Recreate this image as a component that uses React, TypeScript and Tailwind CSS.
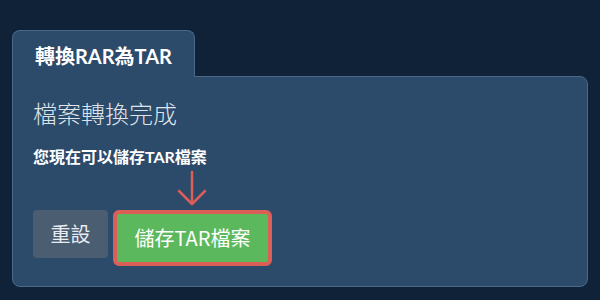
import React from 'react';

const font = { fontFamily: '"Lato", "Noto Sans CJK TC", sans-serif' };
const cjk = { fontFamily: '"Noto Sans CJK TC", sans-serif' };

export default function App() {
    return (
        <div className="w-[600px] h-[300px] bg-[#0f2237] px-3 pt-[30px]" style={font}>
            <div className="relative z-10 -mb-px w-[183px] h-[47px] bg-[#2c4a6a] border border-b-0 border-[#4b6888] rounded-t-lg flex items-center pl-[22px] pt-[3px]">
                <span className="text-white font-bold text-[20px] leading-none">轉換RAR為TAR</span>
            </div>
            <div className="w-[576px] h-[211px] bg-[#2c4a6a] border border-[#4b6888] rounded-b-lg rounded-tr-lg px-5 pt-[22px]">
                <h2 className="text-[24px] leading-[28px] font-light text-[#dfe4ea]" style={cjk}>檔案轉換完成</h2>
                <p className="mt-[21px] text-[16px] leading-[18px] font-bold text-white">您現在可以儲存TAR檔案</p>
                <div className="pl-[144px] h-[44px] pt-[4px]">
                    <svg width="30" height="36" viewBox="0 0 30 36" fill="none" stroke="#dc5f57" strokeWidth="2.5" strokeLinecap="round" strokeLinejoin="round">
                        <line x1="15" y1="2" x2="15" y2="34" />
                        <polyline points="2,21 15,34 28,21" />
                    </svg>
                </div>
                <div className="flex items-start gap-[5px]" style={cjk}>
                    <button className="w-[75px] h-[48px] rounded bg-[#4b5d70] text-[#e8ecf0] text-[20px]">重設</button>
                    <button className="w-[159px] h-[56px] rounded-md border-4 border-[#dc5f57] bg-[#5cb85c] text-white text-[20px]">儲存TAR檔案</button>
                </div>
            </div>
        </div>
    );
}
